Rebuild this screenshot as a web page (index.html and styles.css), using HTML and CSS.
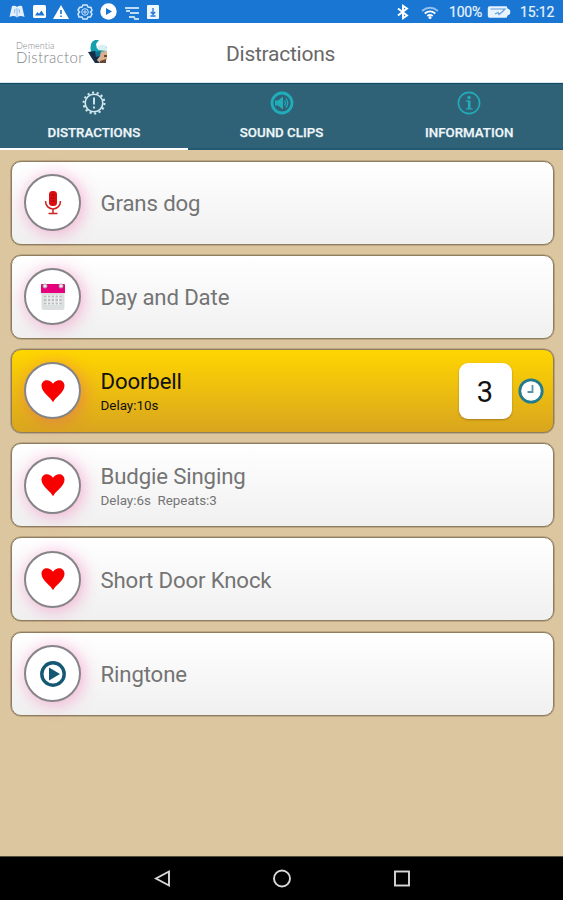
FILE: index.html
```html
<!DOCTYPE html>
<html lang="en">
<head>
<meta charset="utf-8">
<title>Distractions</title>
<link rel="stylesheet" href="styles.css">
</head>
<body>
<svg class="defs" width="0" height="0" aria-hidden="true">
  <symbol id="heart" viewBox="0 0 24 24"><path fill="#f80000" d="M12 23.300C10 18.500 .5 13.500 .5 6.800C.5 .3 8.700-.7 12 4.800C15.300-.7 23.500 .3 23.500 6.800C23.500 13.500 14 18.500 12 23.300Z"/></symbol>
</svg>
<div class="status">
  <div class="status-left">
    <svg width="16" height="14" viewBox="0 0 16 14"><path fill="#e3effb" d="M3 1Q6 0 8 2Q10 0 13 1L15.500 12Q11 10 8 12.500Q5 10 .5 12Z"/><path d="M8 3V12M6 4L5.500 8M10 4L10.500 8" stroke="#8ab8e8" fill="none"/></svg>
    <svg width="13" height="13" viewBox="0 0 13 13"><rect width="13" height="13" rx="1.500" fill="#fff"/><path fill="#1976d2" d="M2 10.500L4.500 7L6 8.800L8.500 5.500L11.500 10.500Z"/></svg>
    <svg width="16" height="14" viewBox="0 0 16 14"><path fill="#fff" d="M8 0L16 14H0Z"/><path d="M8 5V9M8 10.500V12" stroke="#1976d2" stroke-width="1.600"/></svg>
    <svg width="16" height="16" viewBox="0 0 16 16" fill="none" stroke="#d4e8fb"><path stroke-width="1.500" d="M6 1H10L11 3L14 3.500L15 6.500L13.500 8L15 10L13.500 13L11 13L10 15H6L5 13L2 13L1 10L2.500 8L1 6L2.500 3.500L5 3Z"/><circle cx="8" cy="8" r="3.300"/><circle cx="8" cy="8" r="1.200"/></svg>
    <svg width="17" height="17" viewBox="0 0 17 17"><circle cx="8.500" cy="8.500" r="8.200" fill="#fff"/><path d="M6 5L12 8.500L6 12Z" fill="#1976d2"/></svg>
    <svg class="dim" width="15" height="14" viewBox="0 0 15 14" fill="none" stroke="#bfdcf6" stroke-width="1.800"><path d="M0 2H14M1 5H5M5 7H14M4 11H9L10 13H14"/></svg>
    <svg width="12" height="14" viewBox="0 0 12 14"><rect width="12" height="14" rx="1" fill="#eef6fe"/><path d="M6 3V9M3.800 7L6 9.300L8.200 7M3.500 11H8.500" stroke="#1976d2" fill="none" stroke-width="1.300"/></svg>
  </div>
  <div class="status-right">
    <svg class="bt" width="12" height="16" viewBox="0 0 12 16" fill="none" stroke="#fff" stroke-width="1.900"><path d="M1 4.500L10 11.500L6 14.200V1.800L10 4.500L1 11.500"/></svg>
    <svg class="wifi" width="18" height="14" viewBox="0 0 18 14" fill="none" stroke-width="1.800"><path stroke="#8fc0ef" d="M1 5Q9-1.500 17 5"/><path stroke="#fff" d="M3.700 7.500Q9 3.200 14.300 7.500M6.300 10Q9 7.800 11.700 10"/><circle cx="9" cy="11.500" r="1.500" fill="#fff" stroke="none"/></svg>
    <span class="pct">100%</span>
    <svg class="bat" width="24" height="12" viewBox="0 0 24 12"><path d="M2.500 .2H19.500L21 3Q23.300 3 23.300 6Q23.300 9 21 9L19.500 11.800H2.500Q.8 11.800 .8 10V2Q.8 .2 2.500 .2Z" fill="#e8f3fd"/><path d="M3.500 3H18L15 6L12 8.500L11 6.500L8 8" fill="none" stroke="#5b9de0" stroke-width="1.200"/></svg>
    <span class="time">15:12</span>
  </div>
</div>
<header class="header">
  <div class="brand">
    <div class="brand-text"><span class="brand-small">Dementia</span><span class="brand-big">Distractor</span></div>
    <svg class="brand-mark" width="21" height="26" viewBox="0 0 21 26"><path fill="#169fac" d="M3 13Q1 3 7 1L11 1L8 5L9 10L14 6L19 8V12L9 15Z"/><path fill="#d9f0f2" d="M10 7Q17 3 19 9V12L10 11Z"/><path fill="#d8b08e" d="M11 13L19 12V20L16 24H9L10 17Z"/><path fill="#152d48" d="M0 13L7 12L12 17L9 21L12 24L7 24L3 18Z"/><path fill="#674735" d="M16 16H19V18H16ZM12 22L18 20V24H12Z"/><path fill="#0b7192" d="M7 13L13 12L12 17L8 18Z"/></svg>
  </div>
  <h1 class="title">Distractions</h1>
</header>
<nav class="tabs">
  <div class="tab active">
    <svg width="24" height="24" viewBox="0 0 24 24" fill="none" stroke="#d3eaf2"><circle cx="12" cy="12" r="8.800" stroke-width="1.600"/><circle cx="12" cy="12" r="10.400" stroke-width="2" stroke-dasharray="2.100 2.567"/><path d="M12 6.500V13.500M12 15.500V17.500" stroke-width="1.900"/></svg>
    <span>DISTRACTIONS</span>
  </div>
  <div class="tab">
    <svg width="24" height="24" viewBox="0 0 24 24" fill="none" stroke="#20adba"><circle cx="12" cy="12" r="10" stroke-width="2.800"/><path fill="#20adba" stroke="none" d="M5 9.500H8L13 5.500V18.500L8 14.500H5Z"/><path stroke-width="1.200" d="M14.500 9.500Q16.500 12 14.500 14.500M15.800 7.300Q19.800 12 15.800 16.700"/></svg>
    <span>SOUND CLIPS</span>
  </div>
  <div class="tab">
    <svg width="24" height="24" viewBox="0 0 24 24" fill="none" stroke="#20adba"><circle cx="12" cy="12" r="10.600" stroke-width="1.600"/><circle cx="12" cy="6.500" r="1.700" fill="#20adba" stroke="none"/><path d="M9 10.200H12.600M9 17.800H15.500" stroke-width="1.300"/><path d="M12.200 9.600V18" stroke-width="2.600"/></svg>
    <span>INFORMATION</span>
  </div>
</nav>
<main class="list">
  <div class="card">
    <div class="disc"><svg width="18" height="26" viewBox="0 0 18 26"><rect x="5" y="1" width="8" height="15" rx="3.500" fill="#d90d12"/><path d="M7 5H11M7 8H11M7 11H11" stroke="#a90408" stroke-width=".8"/><path d="M1.500 11C1.500 21.500 16.500 21.500 16.500 11M9 19V23M4.500 23.500H13.500" fill="none" stroke="#d02020" stroke-width="1.500"/></svg></div>
    <div class="label"><span class="name">Grans dog</span></div>
  </div>
  <div class="card">
    <div class="disc"><svg width="26" height="29" viewBox="0 0 26 29"><rect x="1.500" y="8" width="23" height="20" rx="2" fill="#dcdfdf"/><path d="M1 3Q1 2 2 2H24Q25 2 25 3V11H1Z" fill="#e6007e"/><path d="M4 14.500H22M4 18H22M4 21.500H22" stroke="#fff" stroke-width="2.600"/><path d="M4 14.500H22M4 18H22M4 21.500H22" stroke="#b8bdbd" stroke-width="2.200" stroke-dasharray="2.600 1.200"/><circle cx="5" cy="4" r="2" fill="#eee" stroke="#aaa"/><circle cx="21" cy="4" r="2" fill="#eee" stroke="#aaa"/></svg></div>
    <div class="label"><span class="name">Day and Date</span></div>
  </div>
  <div class="card selected">
    <div class="disc"><svg width="24" height="24"><use href="#heart"/></svg></div>
    <div class="label"><span class="name">Doorbell</span><span class="meta">Delay:10s</span></div>
    <div class="count">3</div>
    <svg class="clock" width="26" height="26" viewBox="0 0 26 26"><circle cx="13" cy="13" r="11.200" fill="#fff" stroke="#237b8e" stroke-width="2.800"/><path d="M14.500 7V14H9.500" fill="none" stroke="#5794a5" stroke-width="1.800"/></svg>
  </div>
  <div class="card">
    <div class="disc"><svg width="24" height="24"><use href="#heart"/></svg></div>
    <div class="label"><span class="name">Budgie Singing</span><span class="meta">Delay:6s&nbsp; Repeats:3</span></div>
  </div>
  <div class="card">
    <div class="disc"><svg width="24" height="24"><use href="#heart"/></svg></div>
    <div class="label"><span class="name">Short Door Knock</span></div>
  </div>
  <div class="card">
    <div class="disc"><svg width="26" height="26" viewBox="0 0 26 26"><circle cx="13" cy="13" r="11.200" fill="#fff" stroke="#155873" stroke-width="3.400"/><path d="M9 6.500L20 13L9 19.500Z" fill="#155873"/></svg></div>
    <div class="label"><span class="name">Ringtone</span></div>
  </div>
</main>
<footer class="navbar">
  <svg width="18" height="20" viewBox="0 0 18 20"><path d="M16 2.500V16.500L3 9.500Z" fill="none" stroke="#d8d8d8" stroke-width="1.900"/></svg>
  <svg width="20" height="20" viewBox="0 0 20 20"><circle cx="10" cy="9.500" r="8" fill="none" stroke="#d8d8d8" stroke-width="1.900"/></svg>
  <svg width="18" height="18" viewBox="0 0 18 18"><rect x="2" y="1.500" width="14" height="14" fill="none" stroke="#d8d8d8" stroke-width="1.900"/></svg>
</footer>
</body>
</html>
```

FILE: styles.css
```css
* { box-sizing: border-box; }
body {
  margin: 0;
  height: 900px;
  display: flex;
  flex-direction: column;
  overflow: hidden;
  background: #dcc69f;
  font-family: Roboto, "Liberation Sans", sans-serif;
}
svg { display: block; flex: none; }
.defs { display: none; }
.status {
  height: 23px;
  flex: none;
  background: #1976d2;
  color: #e8f3fd;
  display: flex;
  justify-content: space-between;
  padding: 0 8px 0 9px;
}
.status-left, .status-right { display: flex; align-items: center; }
.status-left { gap: 7.500px; }
.dim { margin-top: 3px; }
.pct, .time { font-size: 14px; line-height: 24px; -webkit-text-stroke: .2px; }
.bt { margin-right: 12px; margin-top: 1px; }
.wifi { margin-right: 10px; margin-top: 3px; }
.pct { width: 36px; letter-spacing: -.2px; }
.bat { margin-left: 2px; margin-right: 9px; }
.time { width: 35px; letter-spacing: -.1px; }
.header {
  height: 60px;
  flex: none;
  background: #fff;
  display: flex;
  border-bottom: 1px solid #d5e7ec;
}
.brand { width: 226px; display: flex; padding: 17px 0 0 16px; }
.brand-text {
  width: 72px;
  display: flex;
  flex-direction: column;
  color: #7f858a;
  font-family: Lato, sans-serif;
  font-weight: 300;
}
.brand-small { font-size: 9px; line-height: 11px; }
.brand-big { font-size: 15px; line-height: 15px; letter-spacing: .35px; margin-top: -1px; height: 15px; }
.brand-small { height: 11px; letter-spacing: .1px; }
.brand-mark { margin-top: -1px; }
.title {
  margin: 0;
  font-size: 21px;
  font-weight: 400;
  line-height: 63px;
  letter-spacing: -.25px;
  color: #686868;
}
.tabs { height: 67px; flex: none; display: flex; background: #306277; border-top: 1px solid #0d4b63; }
.tab {
  flex: 1;
  display: flex;
  flex-direction: column;
  align-items: center;
  padding-top: 7px;
  color: #eef6fa;
  font-size: 13.300px;
  font-weight: 500;
  border-bottom: 2px solid #245a70;
}
.tab span { margin-top: 10px; line-height: 16px; -webkit-text-stroke: .25px; }
.active { border-bottom-color: #fff; }
.list {
  flex: 1;
  display: flex;
  flex-direction: column;
  gap: 10.200px;
  padding: 10.600px 9.500px 0 11px;
}
.card {
  height: 84px;
  flex: none;
  display: flex;
  align-items: center;
  padding: 0 9px 0 12px;
  border: 1px solid #8f7d60;
  border-radius: 10px;
  background: linear-gradient(#fff, #f0f0f0);
  box-shadow: 0 0 0 .6px #9c8a6c;
  color: #747474;
}
.disc {
  width: 57px;
  height: 57px;
  flex: none;
  display: flex;
  align-items: center;
  justify-content: center;
  border: 2px solid #858588;
  border-radius: 50%;
  background: #fff;
  box-shadow: 2px 2px 17px rgba(240, 60, 150, .4);
}
.label { flex: 1; display: flex; flex-direction: column; padding: 1px 0 0 19.500px; }
.name { font-size: 22.200px; line-height: 26px; letter-spacing: -.14px; }
.meta { font-size: 13.400px; line-height: 17px; margin-top: 3px; }
.selected {
  background: linear-gradient(#ffd600, #d9a51f);
  color: #111;
}
.count {
  width: 53px;
  height: 56px;
  border-radius: 9px;
  background: #fff;
  box-shadow: 0 1px 2px #a87c1c;
  text-align: center;
  font-size: 29px;
  line-height: 58px;
}
.clock { margin-left: 6px; }
.navbar {
  height: 44px;
  flex: none;
  background: #000;
  border-top: 1px solid #544b38;
  display: flex;
  align-items: center;
  justify-content: space-between;
  padding: 0 152px 0 153px;
}
```
